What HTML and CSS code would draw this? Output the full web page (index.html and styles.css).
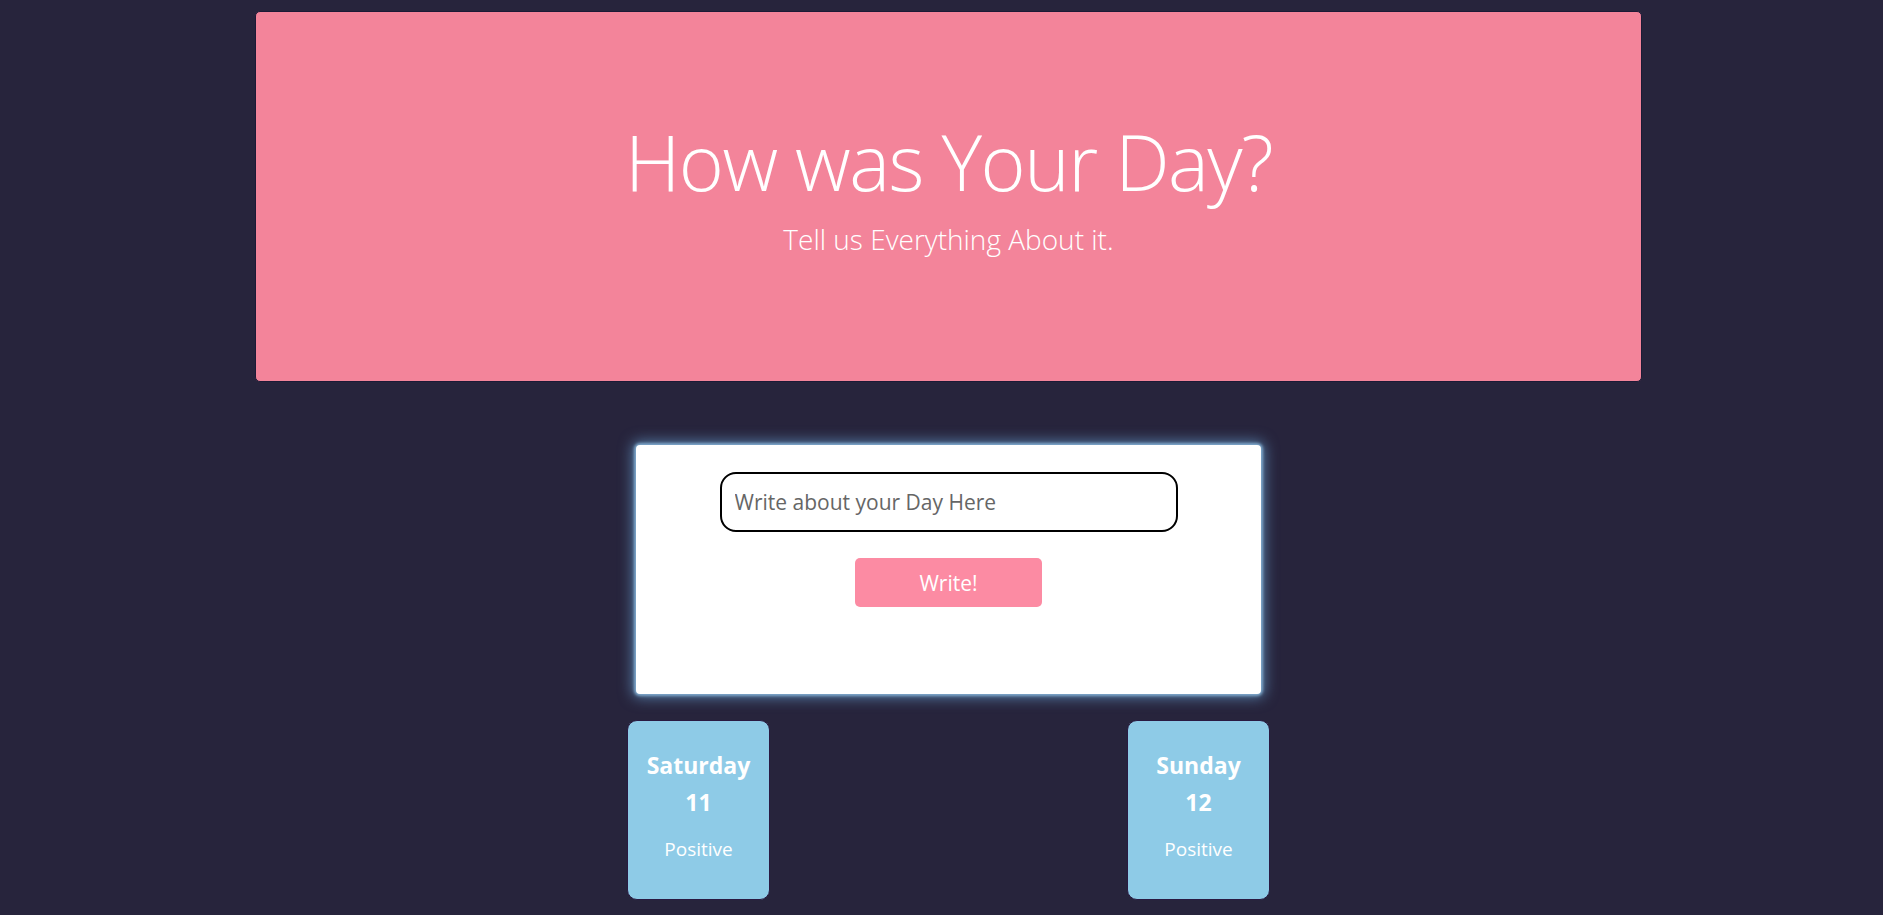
FILE: index.html
```html
<!DOCTYPE html>
<html lang="en">
<head>
<meta charset="utf-8">
<title>How was Your Day?</title>
<link rel="stylesheet" href="styles.css">
</head>
<body>
<div class="page">
  <header class="banner">
    <h1 class="banner-title">How was Your Day?</h1>
    <p class="banner-lead">Tell us Everything About it.</p>
  </header>

  <section class="entry-card">
    <input class="entry-input" type="text" placeholder="Write about your Day Here">
    <button class="entry-button" type="button">Write!</button>
  </section>

  <section class="days">
    <div class="day-card">
      <h4 class="day-title">Saturday<br>11</h4>
      <p class="day-mood">Positive</p>
    </div>
    <div class="day-card">
      <h4 class="day-title">Sunday<br>12</h4>
      <p class="day-mood">Positive</p>
    </div>
  </section>
</div>
</body>
</html>
```

FILE: styles.css
```css
html, body {
  margin: 0;
  padding: 0;
}

body {
  background: #27243c;
  font-family: "Open Sans", "Noto Sans", sans-serif;
  color: #ffffff;
  height: 915px;
  overflow: hidden;
}

.page {
  padding-left: 14px;
  padding-top: 11px;
}

.banner {
  box-sizing: border-box;
  width: 1387px;
  height: 371px;
  margin: 0 auto;
  background: #f3849a;
  border: 1px solid #1c1a36;
  border-radius: 5px;
  text-align: center;
  padding-top: 103px;
}

.banner-title {
  margin: 0;
  font-weight: 300;
  font-size: 77px;
  line-height: 93.6px;
  letter-spacing: -1.5px;
  color: #ffffff;
}

.banner-lead {
  margin: 11px 0 0;
  font-weight: 300;
  font-size: 28px;
  line-height: 39px;
  color: #ffffff;
}

.entry-card {
  box-sizing: border-box;
  width: 625px;
  height: 249px;
  margin: 63px auto 0;
  background: #ffffff;
  border-radius: 4px;
  box-shadow: 0 0 3px 2px #7fa9cc, 0 0 14px 4px rgba(96, 145, 190, 0.75);
  padding-top: 27px;
  display: flex;
  flex-direction: column;
  align-items: center;
}

.entry-input {
  box-sizing: border-box;
  width: 458px;
  height: 60px;
  border: 2px solid #000000;
  border-radius: 16px;
  padding: 0 13px;
  font-family: "Open Sans", "Noto Sans", sans-serif;
  font-size: 21px;
  color: #333;
  background: #fff;
  outline: none;
}

.entry-input::placeholder {
  color: #666666;
}

.entry-button {
  box-sizing: border-box;
  margin-top: 26px;
  width: 187px;
  height: 49px;
  border: none;
  border-radius: 5px;
  background: #fc8ba3;
  color: #ffffff;
  font-family: "Open Sans", "Noto Sans", sans-serif;
  font-size: 21px;
  padding: 0;
}

.days {
  width: 643px;
  margin: 26px auto 0;
  display: flex;
  justify-content: space-between;
}

.day-card {
  box-sizing: border-box;
  width: 143px;
  height: 180px;
  background: #8ecbe7;
  border: 1px solid #2a1a42;
  border-radius: 10px;
  text-align: center;
  padding-top: 26px;
}

.day-title {
  margin: 0;
  font-weight: 700;
  font-size: 23px;
  line-height: 37px;
  color: #ffffff;
}

.day-mood {
  margin: 13px 0 0;
  font-size: 19px;
  line-height: 30px;
  color: #ffffff;
}
```
